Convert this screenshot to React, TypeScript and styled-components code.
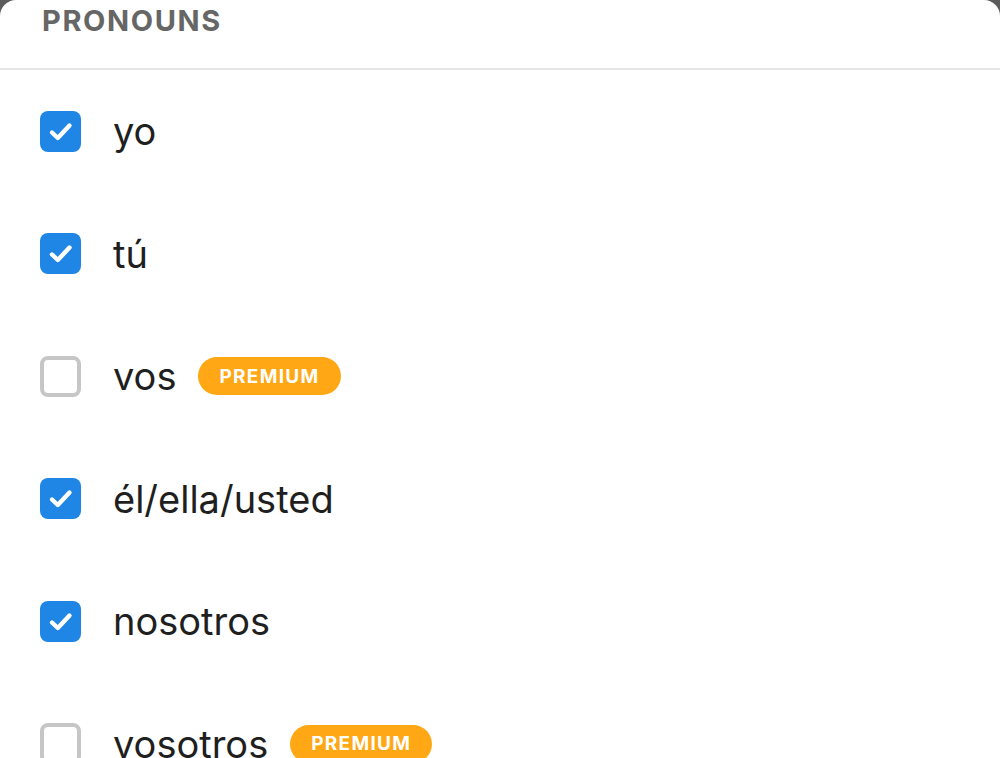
import React from "react";
import styled, { createGlobalStyle } from "styled-components";

const GlobalStyle = createGlobalStyle`
  html, body {
    margin: 0;
    padding: 0;
    background: #5c5c5c;
  }
  body {
    font-family: Inter, "Noto Sans", "Liberation Sans", sans-serif;
  }
`;

interface IPronoun {
  label: string;
  checked: boolean;
  premium?: boolean;
}

const pronouns: IPronoun[] = [
  { label: "yo", checked: true },
  { label: "tú", checked: true },
  { label: "vos", checked: false, premium: true },
  { label: "él/ella/usted", checked: true },
  { label: "nosotros", checked: true },
  { label: "vosotros", checked: false, premium: true },
];

const CheckIcon = () => (
  <svg width="41" height="41" viewBox="0 0 41 41" fill="none">
    <path
      d="M12 21.5L17.8 27L29.5 14.5"
      stroke="#fff"
      strokeWidth="4.4"
      strokeLinecap="round"
      strokeLinejoin="round"
    />
  </svg>
);

const App = (): JSX.Element => {
  return (
    <>
      <GlobalStyle />
      <Sheet>
        <Header>
          <h3>PRONOUNS</h3>
        </Header>
        <List>
          {pronouns.map((p) => (
            <Row key={p.label}>
              <Box checked={p.checked}>{p.checked ? <CheckIcon /> : null}</Box>
              <Label>{p.label}</Label>
              {p.premium ? <Badge>PREMIUM</Badge> : null}
            </Row>
          ))}
        </List>
      </Sheet>
    </>
  );
};

const Sheet = styled.div`
  width: 1000px;
  height: 758px;
  background: #fff;
  border-radius: 16px 16px 0 0;
  overflow: hidden;
  box-sizing: border-box;
`;

const Header = styled.div`
  height: 68px;
  border-bottom: 2px solid #e6e6e6;
  padding-left: 42px;

  & > h3 {
    margin: 0;
    padding-top: 3px;
    font-size: 29px;
    line-height: 36px;
    font-weight: 700;
    letter-spacing: 1.6px;
    color: #666;
  }
`;

const List = styled.div`
  display: flex;
  flex-direction: column;
  padding-left: 40px;
`;

const Row = styled.div`
  display: flex;
  align-items: center;
  height: 122.5px;
`;

const Box = styled.div<{ checked: boolean }>`
  box-sizing: border-box;
  width: 41px;
  height: 41px;
  border-radius: 8px;
  display: flex;
  align-items: center;
  justify-content: center;
  background: ${({ checked }) => (checked ? "#1f86e6" : "#fff")};
  border: ${({ checked }) => (checked ? "none" : "4px solid #c6c6c6")};
  margin-right: 32px;
`;

const Label = styled.span`
  font-size: 38px;
  color: #1f1f1f;
  line-height: 46px;
`;

const Badge = styled.span`
  margin-left: 22px;
  height: 38px;
  padding: 0 21px;
  border-radius: 19px;
  background: #ffa714;
  color: #fff;
  font-size: 19px;
  font-weight: 700;
  letter-spacing: 1.3px;
  display: flex;
  align-items: center;
`;

export default App;
